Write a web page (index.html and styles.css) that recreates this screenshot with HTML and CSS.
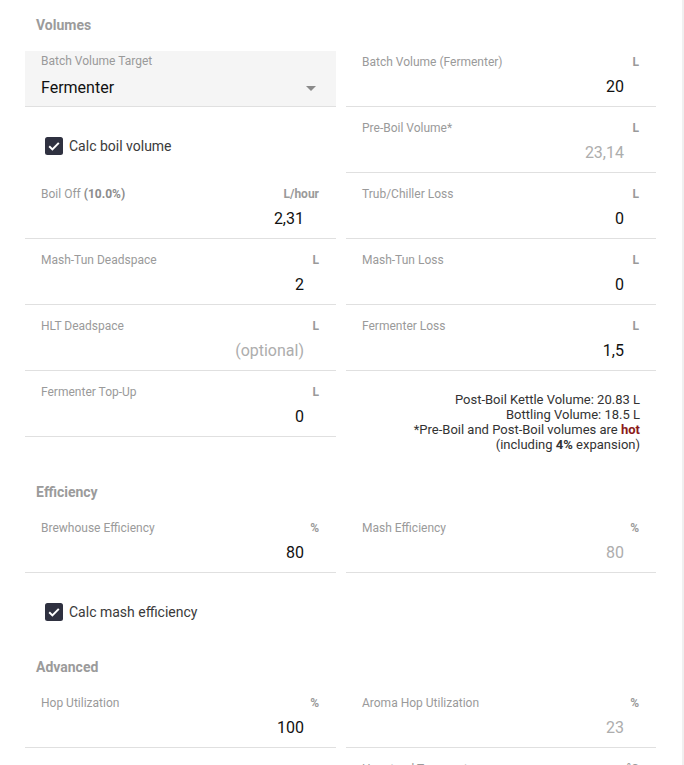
FILE: index.html
```html
<!DOCTYPE html>
<html>
<head>
<meta charset="utf-8">
<link rel="stylesheet" href="styles.css">
</head>
<body>
<div class="page">
  <main class="main">
    <section class="section sec-volumes">
      <h2 class="heading">Volumes</h2>
      <div class="grid">
        <div class="field select">
          <div class="select-box">
            <div class="label-row"><span class="label">Batch Volume Target</span></div>
            <div class="select-value"><span>Fermenter</span><span class="arrow"></span></div>
          </div>
        </div>
        <div class="field">
          <div class="label-row"><span class="label">Batch Volume (Fermenter)</span><span class="unit">L</span></div>
          <div class="value">20</div>
        </div>

        <div class="check-row">
          <label class="check">
            <svg class="box" width="18" height="18" viewBox="0 0 18 18"><rect x="0" y="0" width="18" height="18" rx="2.5" fill="#2f3140"/><polyline points="4.2,9.3 7.4,12.4 13.8,5.9" fill="none" stroke="#fff" stroke-width="2"/></svg>
            <span>Calc boil volume</span>
          </label>
        </div>
        <div class="field">
          <div class="label-row"><span class="label">Pre-Boil Volume*</span><span class="unit">L</span></div>
          <div class="value disabled">23,14</div>
        </div>

        <div class="field">
          <div class="label-row"><span class="label">Boil Off <b>(10.0%)</b></span><span class="unit">L/hour</span></div>
          <div class="value">2,31</div>
        </div>
        <div class="field">
          <div class="label-row"><span class="label">Trub/Chiller Loss</span><span class="unit">L</span></div>
          <div class="value">0</div>
        </div>

        <div class="field">
          <div class="label-row"><span class="label">Mash-Tun Deadspace</span><span class="unit">L</span></div>
          <div class="value">2</div>
        </div>
        <div class="field">
          <div class="label-row"><span class="label">Mash-Tun Loss</span><span class="unit">L</span></div>
          <div class="value">0</div>
        </div>

        <div class="field">
          <div class="label-row"><span class="label">HLT Deadspace</span><span class="unit">L</span></div>
          <div class="value placeholder">(optional)</div>
        </div>
        <div class="field">
          <div class="label-row"><span class="label">Fermenter Loss</span><span class="unit">L</span></div>
          <div class="value">1,5</div>
        </div>

        <div class="field">
          <div class="label-row"><span class="label">Fermenter Top-Up</span><span class="unit">L</span></div>
          <div class="value">0</div>
        </div>
        <div class="info">
          <div>Post-Boil Kettle Volume: 20.83 L</div>
          <div>Bottling Volume: 18.5 L</div>
          <div>*Pre-Boil and Post-Boil volumes are <b class="hot">hot</b></div>
          <div>(including <b>4%</b> expansion)</div>
        </div>
      </div>
    </section>

    <section class="section sec-efficiency">
      <h2 class="heading">Efficiency</h2>
      <div class="grid">
        <div class="field">
          <div class="label-row"><span class="label">Brewhouse Efficiency</span><span class="unit">%</span></div>
          <div class="value">80</div>
        </div>
        <div class="field">
          <div class="label-row"><span class="label">Mash Efficiency</span><span class="unit">%</span></div>
          <div class="value disabled">80</div>
        </div>
        <div class="check-row">
          <label class="check">
            <svg class="box" width="18" height="18" viewBox="0 0 18 18"><rect x="0" y="0" width="18" height="18" rx="2.5" fill="#2f3140"/><polyline points="4.2,9.3 7.4,12.4 13.8,5.9" fill="none" stroke="#fff" stroke-width="2"/></svg>
            <span>Calc mash efficiency</span>
          </label>
        </div>
        <div></div>
      </div>
    </section>

    <section class="section sec-advanced">
      <h2 class="heading">Advanced</h2>
      <div class="grid">
        <div class="field">
          <div class="label-row"><span class="label">Hop Utilization</span><span class="unit">%</span></div>
          <div class="value">100</div>
        </div>
        <div class="field">
          <div class="label-row"><span class="label">Aroma Hop Utilization</span><span class="unit">%</span></div>
          <div class="value disabled">23</div>
        </div>
        <div></div>
        <div class="field">
          <div class="label-row"><span class="label">Hopstand Temperature</span><span class="unit">°C</span></div>
          <div class="value">80</div>
        </div>
      </div>
    </section>
  </main>
  <div class="scrollbar"></div>
</div>
</body>
</html>
```

FILE: styles.css
```css
html, body {
  margin: 0;
  padding: 0;
  background: #fff;
  height: 765px;
  overflow: hidden;
}
body {
  font-family: Roboto, "Liberation Sans", Arial, sans-serif;
  color: #111;
}
.page {
  display: flex;
  height: 765px;
}
.main {
  width: 682px;
  padding: 10px 0 0 25px;
  box-sizing: border-box;
}
.scrollbar {
  width: 2px;
  background: #f0f0f0;
  height: 765px;
}
.heading {
  margin: 0 0 1px 0;
  padding-left: 11px;
  font-size: 14px;
  line-height: 30px;
  font-weight: 700;
  color: #9b9b9b;
}
.sec-efficiency { margin-top: 25px; }
.sec-efficiency .heading { margin-bottom: 0; }
.sec-advanced { margin-top: 13px; }
.sec-advanced .heading { margin-bottom: 0; }
.grid {
  display: grid;
  grid-template-columns: 311px 310px;
  column-gap: 10px;
  align-items: start;
}
.field {
  height: 66px;
  box-sizing: border-box;
  border-bottom: 1px solid #e0e0e0;
  padding: 14px 16px 0 16px;
}
.label-row {
  display: flex;
  justify-content: space-between;
  align-items: baseline;
  font-size: 12px;
  line-height: 14px;
}
.label {
  color: #9a9a9a;
}
.label b {
  font-weight: 700;
  color: #8c8c8c;
}
.unit {
  font-size: 12px;
  font-weight: 700;
  color: #9a9a9a;
  padding-right: 1px;
}
.value {
  margin-top: 8px;
  font-size: 16px;
  line-height: 20px;
  text-align: right;
  padding-right: 16px;
  color: #111;
}
.value.disabled, .value.placeholder {
  color: #adadad;
}
.field.select {
  padding: 0;
}
.select-box {
  margin-top: 10px;
  height: 55px;
  box-sizing: border-box;
  background: #f5f5f5;
  padding: 3px 16px 0 16px;
}
.select-value {
  margin-top: 10px;
  display: flex;
  justify-content: space-between;
  align-items: center;
  font-size: 16px;
  line-height: 20px;
  color: #111;
}
.arrow {
  width: 0;
  height: 0;
  border-left: 5px solid transparent;
  border-right: 5px solid transparent;
  border-top: 5px solid #8a8a8a;
  margin-right: 4px;
}
.check-row {
  height: 66px;
  box-sizing: border-box;
  padding: 30px 0 0 20px;
}
.check {
  display: flex;
  align-items: center;
  gap: 6px;
  font-size: 14px;
  line-height: 18px;
  color: #3a3a3a;
}
.box {
  display: block;
  flex: none;
}
.info {
  padding: 21px 16px 0 0;
  text-align: right;
  font-size: 13px;
  line-height: 15px;
  color: #333;
}
.info b {
  font-weight: 700;
}
.info .hot {
  color: #8b1a1a;
}
```
